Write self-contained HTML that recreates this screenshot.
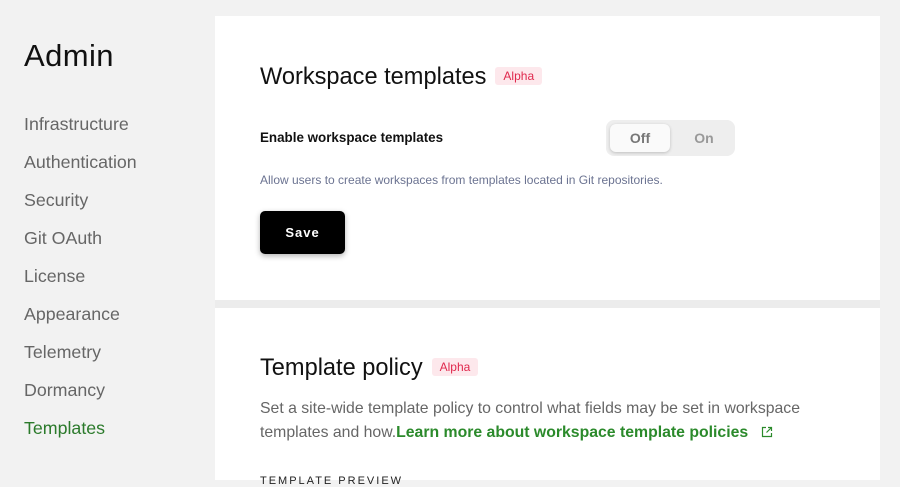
<!DOCTYPE html>
<html><head><meta charset="utf-8"><style>
*{margin:0;padding:0;box-sizing:border-box}
html,body{width:900px;height:480px;overflow:hidden;background:#f2f2f2;font-family:"Liberation Sans",sans-serif}
.side{position:absolute;left:0;top:0;width:215px;height:480px}
.side h1{position:absolute;left:24px;top:38px;font-size:31px;font-weight:400;color:#111;letter-spacing:0.4px}
.side a{position:absolute;left:24px;font-size:17.8px;color:#666;text-decoration:none}
.main{position:absolute;left:215px;top:16px;width:665px;height:464px;background:#ececec}
.card{position:absolute;left:0;width:665px;background:#fff}
.h2{position:absolute;font-size:23.6px;font-weight:400;color:#111}
.badge{display:inline-block;background:#fde8ec;color:#e0284d;font-size:12px;padding:2px 8px;border-radius:3px;vertical-align:4px;margin-left:9px}
</style></head><body>
<div class="side">
<h1>Admin</h1>
<a style="top:114px">Infrastructure</a>
<a style="top:152px">Authentication</a>
<a style="top:190px">Security</a>
<a style="top:228px">Git OAuth</a>
<a style="top:266px">License</a>
<a style="top:304px">Appearance</a>
<a style="top:342px">Telemetry</a>
<a style="top:380px">Dormancy</a>
<a style="top:418px;color:#2b7a2b">Templates</a>
</div>
<div class="main">
<div class="card" style="top:0;height:284px">
<div class="h2" style="left:45px;top:48px">Workspace templates<span class="badge">Alpha</span></div>
<div style="position:absolute;left:45px;top:114px;font-size:13.4px;font-weight:700;color:#111">Enable workspace templates</div>
<div style="position:absolute;left:391px;top:104px;width:129px;height:36px;background:#eeeeee;border-radius:8px">
<div style="position:absolute;left:4px;top:4px;width:60px;height:28px;background:#fafafa;border-radius:6px;box-shadow:0 1px 3px rgba(0,0,0,.2);text-align:center;line-height:28px;font-size:14px;font-weight:700;color:#777">Off</div>
<div style="position:absolute;left:68px;top:4px;width:60px;height:28px;text-align:center;line-height:28px;font-size:14px;font-weight:700;color:#999">On</div>
</div>
<div style="position:absolute;left:45px;top:157px;font-size:12px;color:#6b7391">Allow users to create workspaces from templates located in Git repositories.</div>
<div style="position:absolute;left:45px;top:195px;width:85px;height:43px;background:#000;border-radius:5px;box-shadow:0 2px 6px rgba(0,0,0,.3);color:#fff;font-weight:700;font-size:13px;letter-spacing:1px;text-align:center;line-height:43px">Save</div>
</div>
<div class="card" style="top:292px;height:172px">
<div class="h2" style="left:45px;top:47px">Template policy<span class="badge">Alpha</span></div>
<div style="position:absolute;left:45px;top:89px;width:600px;font-size:15.8px;line-height:24px;color:#666">Set a site-wide template policy to control what fields may be set in workspace templates and how.<span style="color:#2b8a2b;font-weight:700">Learn more about workspace template policies</span>&nbsp;&nbsp;&nbsp;<svg width="12" height="12" viewBox="0 0 12 12" style="vertical-align:-1px"><path d="M5 1.5H1.5v9h9V7M7 1.5h3.5V5M10.5 1.5L5.5 6.5" fill="none" stroke="#2b8a2b" stroke-width="1.2"/></svg></div>
<div style="position:absolute;left:45px;top:167px;font-size:11px;letter-spacing:2px;color:#222">TEMPLATE PREVIEW</div>
</div>
</div>
</body></html>
